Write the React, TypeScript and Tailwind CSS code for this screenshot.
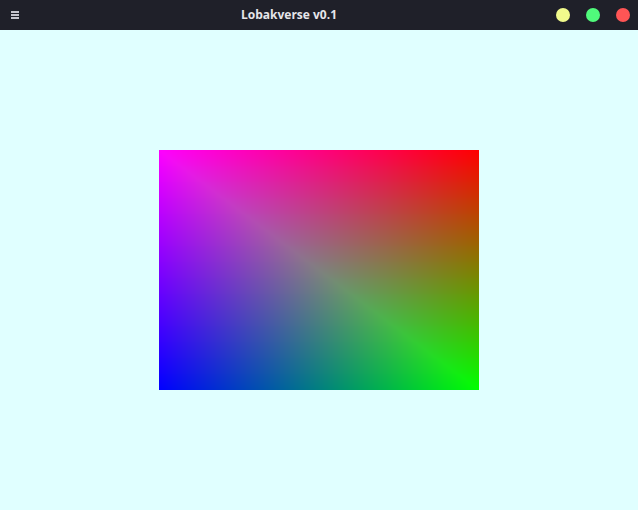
import React, { useEffect, useRef } from "react";

function Gradient() {
  const ref = useRef<HTMLCanvasElement>(null);
  useEffect(() => {
    const c = ref.current;
    if (!c) return;
    const ctx = c.getContext("2d");
    if (!ctx) return;
    const W = 320, H = 240;
    const img = ctx.createImageData(W, H);
    for (let y = 0; y < H; y++) {
      for (let x = 0; x < W; x++) {
        const u = (x + 0.5) / W;
        const v = (y + 0.5) / H;
        let r: number, g: number, b: number;
        if (u >= v) {
          r = 1 - v;
          g = v;
          b = 1 - u;
        } else {
          r = 1 - v;
          g = u;
          b = 1 - u;
        }
        const i = (y * W + x) * 4;
        img.data[i] = Math.round(r * 255);
        img.data[i + 1] = Math.round(g * 255);
        img.data[i + 2] = Math.round(b * 255);
        img.data[i + 3] = 255;
      }
    }
    ctx.putImageData(img, 0, 0);
  }, []);
  return <canvas ref={ref} width={320} height={240} className="block w-[320px] h-[240px]" />;
}

export default function App() {
  return (
    <div className="w-[638px] h-[510px] flex flex-col bg-[#e0ffff] overflow-hidden" style={{ fontFamily: "'Open Sans', 'Noto Sans', sans-serif" }}>
      <div className="h-[30px] flex items-center bg-[#1f2029] shrink-0">
        <div className="w-[30px] h-full flex items-center pl-[11px]">
          <div className="flex flex-col gap-[1px]">
            <div className="w-[8px] h-[2px] bg-[#c4c4cc]" />
            <div className="w-[8px] h-[2px] bg-[#c4c4cc]" />
            <div className="w-[8px] h-[2px] bg-[#c4c4cc]" />
          </div>
        </div>
        <div className="flex-1 text-center text-[12px] font-bold text-[#e6e6ea]">Lobakverse v0.1</div>
        <div className="w-[90px] flex items-center gap-4 px-[8px]">
          <div className="w-[14px] h-[14px] rounded-full bg-[#f1fa8c]" />
          <div className="w-[14px] h-[14px] rounded-full bg-[#50fa7b]" />
          <div className="w-[14px] h-[14px] rounded-full bg-[#ff5555]" />
        </div>
      </div>
      <div className="flex-1 flex items-center justify-center">
        <Gradient />
      </div>
    </div>
  );
}
